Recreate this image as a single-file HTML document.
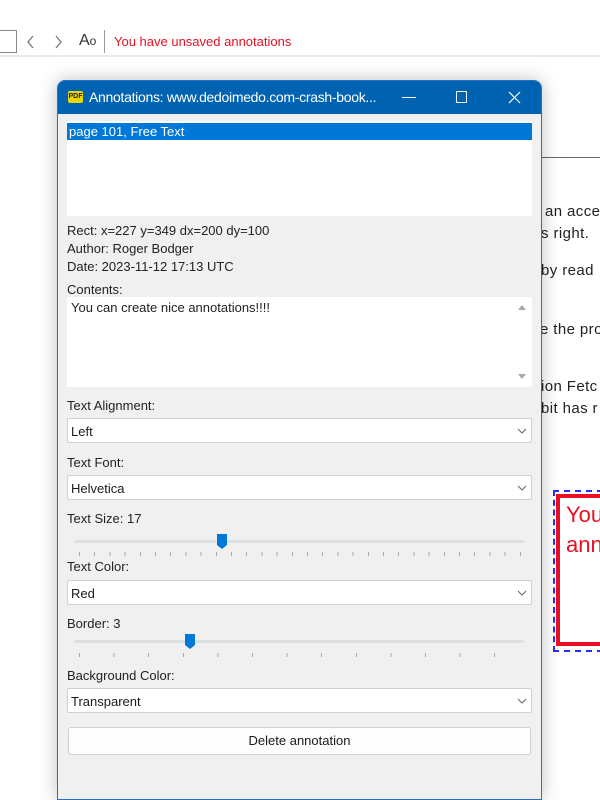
<!DOCTYPE html>
<html><head><style>
*{margin:0;padding:0;box-sizing:border-box}
body{width:600px;height:796px;background:#fff;position:relative;overflow:hidden;font-family:"Liberation Sans",sans-serif;color:#1a1a1a}
.a{position:absolute;white-space:nowrap}
.lbl{font-size:13px;color:#222}
.combo{position:absolute;left:67px;width:465px;height:25px;background:#fff;border:1px solid #d0d0d0;border-radius:2px;font-size:13px;padding:5px 3px}
.combo svg{position:absolute;right:4px;top:8px}
.doc{font-size:15px;color:#222;font-family:"Liberation Sans",sans-serif;letter-spacing:.4px}
.ticks{position:absolute;height:4px}
</style></head><body>
<div class="a" style="left:-2px;top:30px;width:19px;height:23px;border:1px solid #888"></div>
<svg class="a" style="left:25px;top:34px" width="12" height="16"><path d="M8 2 L3 8 L8 14" stroke="#777" stroke-width="1.3" fill="none"/></svg>
<svg class="a" style="left:52px;top:34px" width="12" height="16"><path d="M4 2 L9 8 L4 14" stroke="#777" stroke-width="1.3" fill="none"/></svg>
<div class="a" style="left:79px;top:32px;font-size:16px;color:#333">A<span style="font-size:12px">o</span></div>
<div class="a" style="left:104px;top:30px;width:1px;height:23px;background:#999"></div>
<div class="a" style="left:114px;top:34px;font-size:13px;color:#e81123">You have unsaved annotations</div>
<div class="a" style="left:0;top:55px;width:600px;height:2px;background:#eaeaea"></div>
<div class="a" style="left:542px;top:157px;width:58px;height:1px;background:#666"></div>
<div class="a doc" style="left:545px;top:203px">an acce</div>
<div class="a doc" style="left:541px;top:225px">s right.</div>
<div class="a doc" style="left:541px;top:262px">by read</div>
<div class="a doc" style="left:540px;top:321px">e the pro</div>
<div class="a doc" style="left:541px;top:378px">ion Fetc</div>
<div class="a doc" style="left:541px;top:400px">bit has r</div>
<div class="a" style="left:553px;top:490px;width:50px;height:162px;border:2px dashed #2b2bff"></div>
<div class="a" style="left:556px;top:494px;width:50px;height:152px;border:4px solid #e81123"></div>
<div class="a" style="left:566px;top:500px;font-size:22px;color:#e81123;line-height:30px">You<br>ann</div>
<div class="a" style="left:57px;top:80px;width:485px;height:720px;background:#f0f0f0;border:1px solid #2a6fc0;border-radius:8px 8px 0 0;box-shadow:0 0 18px rgba(0,0,0,.25);overflow:hidden">
<div style="height:33px;background:#0063b1;position:relative">
<div class="a" style="left:10px;top:10px;width:15px;height:12px;background:#e8d600;border-radius:2px;font-size:7px;font-weight:bold;color:#222;text-align:center;line-height:12px">PDF</div>
<div class="a" style="left:31px;top:8px;font-size:14px;color:#fff;letter-spacing:-.3px">Annotations: www.dedoimedo.com-crash-book...</div>
<div class="a" style="left:344px;top:16px;width:14px;height:1px;background:#fff"></div>
<div class="a" style="left:398px;top:10px;width:11px;height:12px;border:1px solid #fff;border-radius:1px"></div>
<svg class="a" style="left:450px;top:10px" width="13" height="13"><path d="M1 1L12 12M12 1L1 12" stroke="#fff" stroke-width="1.2"/></svg>
</div>
</div>
<div class="a" style="left:67px;top:121px;width:465px;height:95px;background:#fff"></div>
<div class="a" style="left:67px;top:123px;width:465px;height:17px;background:#0078d7;color:#fff;font-size:13px;padding:1px 2px">page 101, Free Text</div>
<div class="a lbl" style="left:67px;top:223px">Rect: x=227 y=349 dx=200 dy=100</div>
<div class="a lbl" style="left:67px;top:241px">Author: Roger Bodger</div>
<div class="a lbl" style="left:67px;top:259px">Date: 2023-11-12 17:13 UTC</div>
<div class="a lbl" style="left:67px;top:282px">Contents:</div>
<div class="a" style="left:67px;top:297px;width:465px;height:90px;background:#fff"></div>
<div class="a lbl" style="left:71px;top:300px">You can create nice annotations!!!!</div>
<svg class="a" style="left:517px;top:303px" width="10" height="8"><path d="M1 7L5 2L9 7Z" fill="#aaa"/></svg>
<svg class="a" style="left:517px;top:373px" width="10" height="8"><path d="M1 1L5 6L9 1Z" fill="#aaa"/></svg>
<div class="a lbl" style="left:67px;top:398px">Text Alignment:</div>
<div class="combo" style="top:418px">Left<svg width="10" height="8"><path d="M1 2L5 6L9 2" stroke="#666" fill="none"/></svg></div>
<div class="a lbl" style="left:67px;top:455px">Text Font:</div>
<div class="combo" style="top:475px">Helvetica<svg width="10" height="8"><path d="M1 2L5 6L9 2" stroke="#666" fill="none"/></svg></div>
<div class="a lbl" style="left:67px;top:511px">Text Size: 17</div>
<div class="a" style="left:74px;top:540px;width:450px;height:3px;background:#dde0e0;border-radius:2px"></div>
<div class="ticks" style="left:79px;top:552px;width:444px;background:repeating-linear-gradient(90deg,#aaa 0 1px,transparent 1px 15.2px)"></div>
<svg class="a" style="left:216px;top:533px" width="12" height="17"><path d="M1 1H11V12L6 16L1 12Z" fill="#0078d7"/></svg>
<div class="a lbl" style="left:67px;top:559px">Text Color:</div>
<div class="combo" style="top:580px">Red<svg width="10" height="8"><path d="M1 2L5 6L9 2" stroke="#666" fill="none"/></svg></div>
<div class="a lbl" style="left:67px;top:616px">Border: 3</div>
<div class="a" style="left:74px;top:640px;width:450px;height:3px;background:#dde0e0;border-radius:2px"></div>
<div class="ticks" style="left:79px;top:653px;width:444px;background:repeating-linear-gradient(90deg,#aaa 0 1px,transparent 1px 34.6px)"></div>
<svg class="a" style="left:184px;top:633px" width="12" height="17"><path d="M1 1H11V12L6 16L1 12Z" fill="#0078d7"/></svg>
<div class="a lbl" style="left:67px;top:668px">Background Color:</div>
<div class="combo" style="top:688px">Transparent<svg width="10" height="8"><path d="M1 2L5 6L9 2" stroke="#666" fill="none"/></svg></div>
<div class="a" style="left:68px;top:727px;width:463px;height:28px;background:#fdfdfd;border:1px solid #d0d0d0;border-radius:3px;font-size:13px;text-align:center;line-height:26px">Delete annotation</div>
</body></html>
